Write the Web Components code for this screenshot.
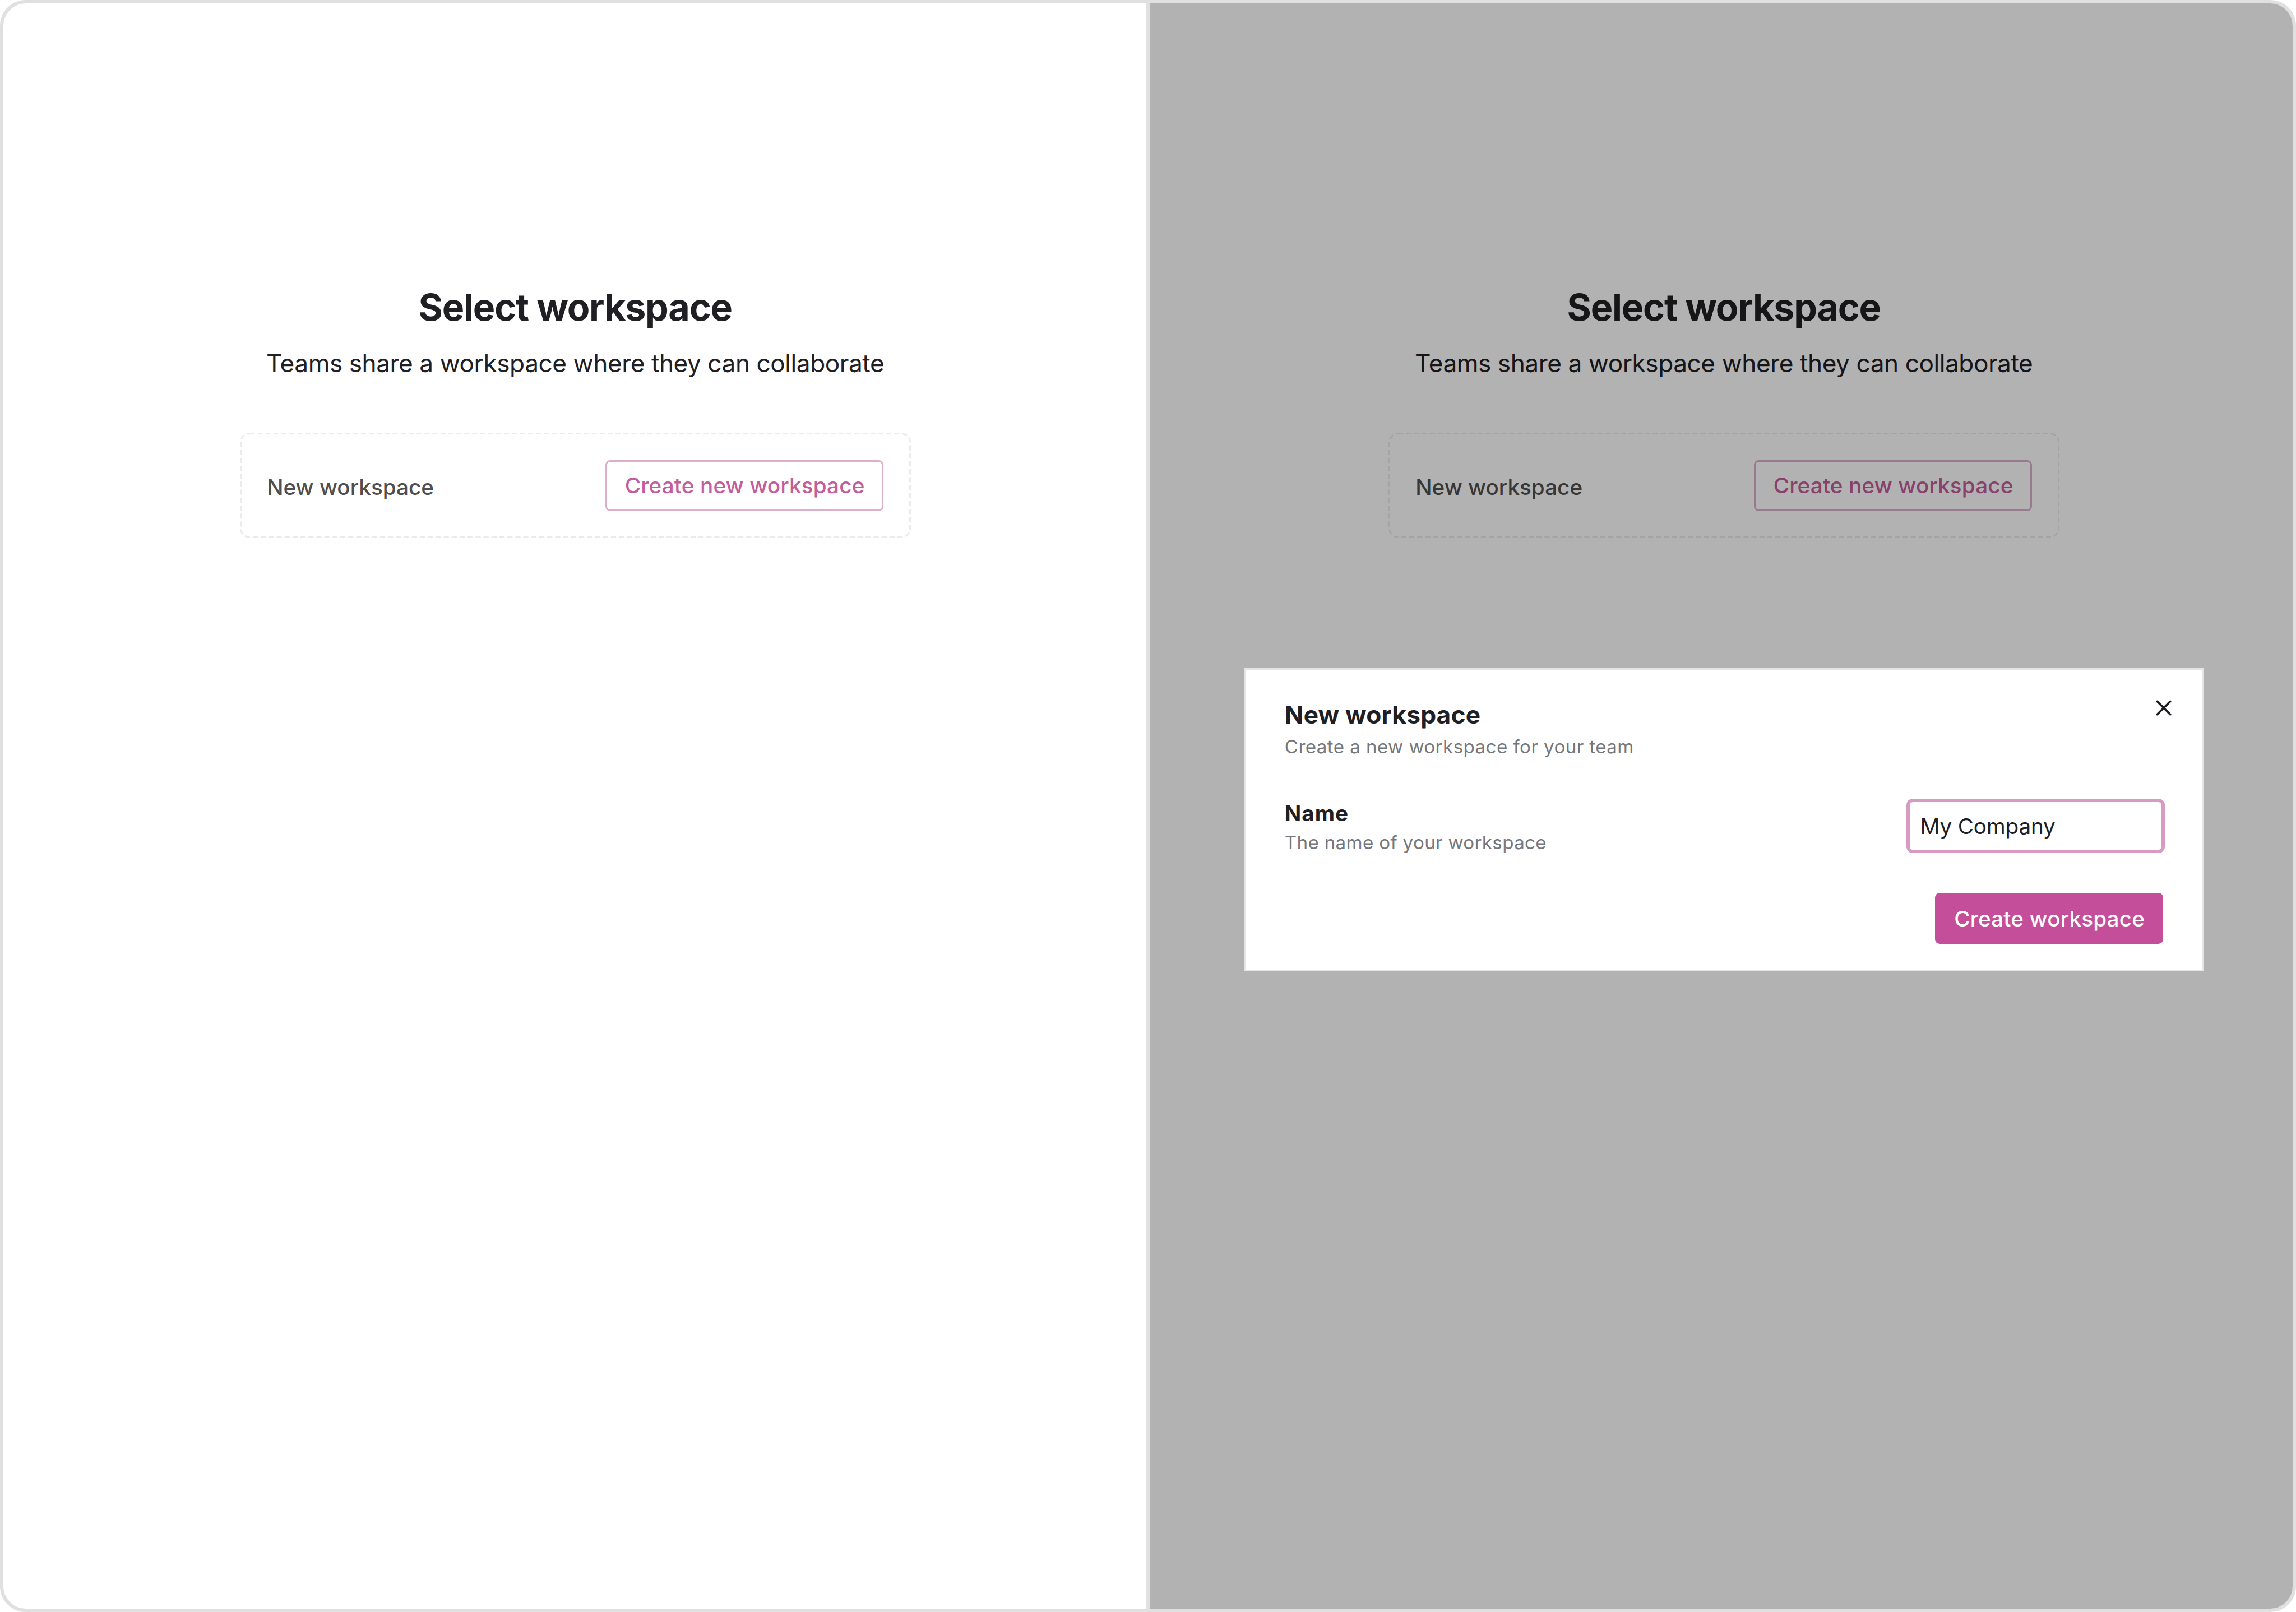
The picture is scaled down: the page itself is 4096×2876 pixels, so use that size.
<!DOCTYPE html>
<html lang="en">
<head>
<meta charset="utf-8">
<title>Select workspace</title>
<style>
  html, body { margin: 0; height: 100%; background: #fff; }
  body { font-family: Inter, "Liberation Sans", sans-serif; color: #202024; overflow: hidden; }
</style>
</head>
<body>
<split-frame>
  <app-pane>
    <workspace-picker heading="Select workspace" subtitle="Teams share a workspace where they can collaborate">
      <new-card label="New workspace"><ui-button variant="outline">Create new workspace</ui-button></new-card>
    </workspace-picker>
  </app-pane>
  <app-pane class="second">
    <workspace-picker heading="Select workspace" subtitle="Teams share a workspace where they can collaborate">
      <new-card label="New workspace"><ui-button variant="outline">Create new workspace</ui-button></new-card>
    </workspace-picker>
    <modal-overlay slot="overlay">
      <workspace-dialog heading="New workspace" subtitle="Create a new workspace for your team">
        <form-field label="Name" hint="The name of your workspace"><text-input value="My Company"></text-input></form-field>
        <ui-button slot="actions" variant="primary">Create workspace</ui-button>
      </workspace-dialog>
    </modal-overlay>
  </app-pane>
</split-frame>

<script>
const define = (name, render) => customElements.define(name, class extends HTMLElement {
  connectedCallback() {
    if (this.shadowRoot) return;
    this.attachShadow({ mode: 'open' }).innerHTML = render(this);
  }
});
const attr = (el, name) => el.getAttribute(name) || '';

define('split-frame', () => `
  <style>
    :host { display: flex; box-sizing: border-box; width: 4096px; height: 2876px;
      border: 6px solid #e0e0e0; border-radius: 46px; overflow: hidden; background: #e0e0e0; gap: 8px; }
    ::slotted(*) { flex: 1; }
  </style>
  <slot></slot>`);

define('app-pane', () => `
  <style>
    :host { display: block; position: relative; background: #fff; --column-left: 421.6px; }
    :host(.second) { --column-left: 424.7px; }
  </style>
  <slot></slot><slot name="overlay"></slot>`);

define('workspace-picker', el => `
  <style>
    :host { display: flex; flex-direction: column; width: 1197px; padding-top: 502.4px; margin-left: var(--column-left); }
    h1, p { margin: 0; text-align: center; white-space: nowrap; }
    h1 { font-size: 66.3px; line-height: 80px; font-weight: 700; letter-spacing: -1.2px; }
    p { margin-top: 31.3px; margin-bottom: 96.5px; font-size: 44.2px; line-height: 56px; letter-spacing: -.46px; }
  </style>
  <h1>${attr(el, 'heading')}</h1>
  <p>${attr(el, 'subtitle')}</p>
  <slot></slot>`);

define('new-card', el => `
  <style>
    :host { display: grid; height: 188px; }
    svg, .row { grid-area: 1 / 1; }
    svg { width: 1197px; height: 188px; }
    .row { display: flex; align-items: center; justify-content: space-between; padding: 0 48.5px 0 48.6px; }
    .label { padding-top: 5px; font-size: 38.7px; line-height: 50px; font-weight: 500; letter-spacing: 0; color: #4f4f50; }
  </style>
  <svg viewBox="0 0 1197 188" fill="none"><rect x="1.5" y="1.5" width="1194" height="185" rx="15.5" stroke="#ebebeb" stroke-width="3" stroke-dasharray="9.2 5"/></svg>
  <div class="row"><span class="label">${attr(el, 'label')}</span><slot></slot></div>`);

define('ui-button', () => `
  <style>
    :host { display: flex; }
    button { box-sizing: border-box; height: 91px; margin: 0; border-radius: 8.5px; padding: 0 0 0 1px;
      font: 500 38.7px/50px Inter, "Liberation Sans", sans-serif; white-space: nowrap; }
    :host([variant=outline]) button { width: 496px; border: 3px solid #dcaeca; background: none; color: #c55c9c; letter-spacing: .12px; }
    :host([variant=primary]) button { width: 407.6px; border: 0; background: #c54e9a; color: #fff; letter-spacing: .14px; }
  </style>
  <button><slot></slot></button>`);

define('modal-overlay', () => `
  <style>
    :host { position: absolute; inset: 0; display: flex; align-items: flex-start;
      padding: 1185.5px 0 0 168.4px; background: rgba(0, 0, 0, .3); }
  </style>
  <slot></slot>`);

define('workspace-dialog', el => `
  <style>
    :host { display: flex; flex-direction: column; box-sizing: border-box; width: 1710.2px; height: 541.2px;
      border: 3px solid #e5e5e5; background: #fff; padding: 52.6px 68.2px 0 68.4px; }
    header { display: flex; justify-content: space-between; align-items: flex-start; margin-bottom: 71px; }
    h2, p { margin: 0; }
    h2 { font-size: 44.2px; line-height: 56px; font-weight: 700; letter-spacing: .2px; }
    p { margin-top: 7.2px; font-size: 33.2px; line-height: 44px; letter-spacing: .39px; color: #75777d; }
    svg { width: 28px; height: 28px; margin: 1.6px -14.2px 0 0; }
    footer { display: flex; justify-content: flex-end; margin-top: 67.9px; }
  </style>
  <header>
    <div><h2>${attr(el, 'heading')}</h2><p>${attr(el, 'subtitle')}</p></div>
    <svg viewBox="0 0 28 28" fill="none" stroke="#1c1c20" stroke-width="3.7" stroke-linecap="round"><path d="M2.4 2.4 25.6 25.6M25.6 2.4 2.4 25.6"/></svg>
  </header>
  <slot></slot>
  <footer><slot name="actions"></slot></footer>`);

define('form-field', el => `
  <style>
    :host { display: flex; justify-content: space-between; align-items: flex-start; height: 100px; }
    .text { display: flex; flex-direction: column; gap: 5.2px; padding-top: .8px; }
    .label { font-size: 38.7px; line-height: 50px; font-weight: 700; letter-spacing: .95px; }
    .hint { font-size: 33.2px; line-height: 44px; letter-spacing: .3px; color: #75777d; }
  </style>
  <div class="text"><span class="label">${attr(el, 'label')}</span><span class="hint">${attr(el, 'hint')}</span></div>
  <slot></slot>`);

define('text-input', el => `
  <style>
    :host { display: flex; align-items: center; box-sizing: border-box; width: 461.7px; height: 96.5px;
      margin-right: -2.8px; padding-left: 19px; border: 6px solid #d69bc3; border-radius: 11.5px; background: #fff;
      font-size: 38.7px; line-height: 50px; letter-spacing: -.18px; }
  </style>
  <span>${attr(el, 'value')}</span>`);
</script>
</body>
</html>
